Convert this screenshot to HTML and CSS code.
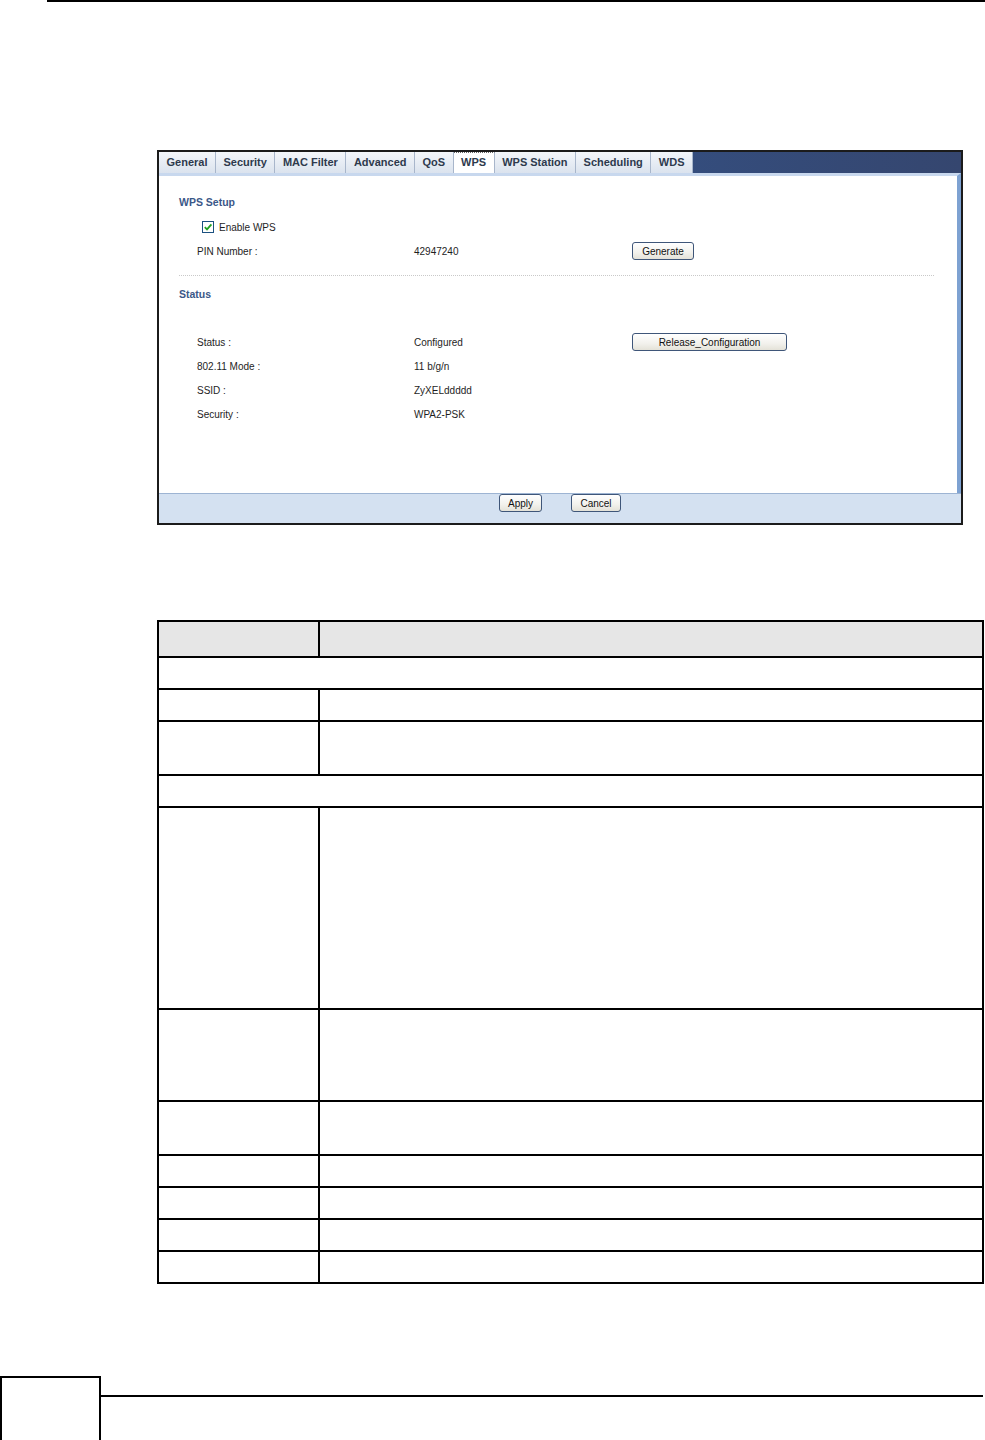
FILE: index.html
```html
<!DOCTYPE html>
<html>
<head>
    <title>WPS</title>
    <link rel="stylesheet" href="styles.css">
</head>
<body>
    <div class="page">
        <div class="top-rule"></div>

        <div class="shot">
            <nav class="tabbar">
                <span class="tab">General</span>
                <span class="tab">Security</span>
                <span class="tab">MAC Filter</span>
                <span class="tab">Advanced</span>
                <span class="tab">QoS</span>
                <span class="tab active">WPS</span>
                <span class="tab">WPS Station</span>
                <span class="tab">Scheduling</span>
                <span class="tab">WDS</span>
            </nav>
            <div class="panel">
                <h2 class="section-title first">WPS Setup</h2>
                <div class="row check-row">
                    <span class="checkbox">
                        <svg width="12" height="12" viewBox="0 0 12 12">
                            <rect x="0.5" y="0.5" width="11" height="11" fill="#fff" stroke="#1c5180"/>
                            <path d="M2.8 6.2 L5 8.4 L9.4 3.4" fill="none" stroke="#21a121" stroke-width="1.8"/>
                        </svg>
                    </span>
                    <span>Enable WPS</span>
                </div>
                <div class="row">
                    <span>PIN Number :</span>
                    <span>42947240</span>
                    <span><button class="btn btn-gen">Generate</button></span>
                </div>
                <div class="sep"></div>
                <h2 class="section-title">Status</h2>
                <div class="rows">
                    <div class="row">
                        <span>Status :</span>
                        <span>Configured</span>
                        <span><button class="btn btn-release">Release_Configuration</button></span>
                    </div>
                    <div class="row">
                        <span>802.11 Mode :</span>
                        <span>11 b/g/n</span>
                    </div>
                    <div class="row">
                        <span>SSID :</span>
                        <span>ZyXELddddd</span>
                    </div>
                    <div class="row">
                        <span>Security :</span>
                        <span>WPA2-PSK</span>
                    </div>
                </div>
            </div>
            <div class="panel-foot">
                <button class="btn btn-apply">Apply</button>
                <button class="btn btn-cancel">Cancel</button>
            </div>
        </div>

        <table class="desc">
            <tr class="h36 head"><td class="c1"></td><td></td></tr>
            <tr class="h32"><td colspan="2"></td></tr>
            <tr class="h32"><td class="c1"></td><td></td></tr>
            <tr class="h54"><td class="c1"></td><td></td></tr>
            <tr class="h32"><td colspan="2"></td></tr>
            <tr class="h202"><td class="c1"></td><td></td></tr>
            <tr class="h92"><td class="c1"></td><td></td></tr>
            <tr class="h54"><td class="c1"></td><td></td></tr>
            <tr class="h32"><td class="c1"></td><td></td></tr>
            <tr class="h32"><td class="c1"></td><td></td></tr>
            <tr class="h32"><td class="c1"></td><td></td></tr>
            <tr class="h32"><td class="c1"></td><td></td></tr>
        </table>

        <footer class="page-foot">
            <div class="page-num"></div>
            <div class="foot-rule"></div>
        </footer>
    </div>
</body>
</html>
```

FILE: styles.css
```css
* {
    box-sizing: border-box;
}

body {
    margin: 0;
    font-family: "Liberation Sans", Arial, sans-serif;
    background: #fff;
    color: #000;
}

.page {
    width: 985px;
    height: 1440px;
    position: relative;
    overflow: hidden;
}

.top-rule {
    margin-left: 47px;
    border-top: 2px solid #000;
}

/* router screenshot */
.shot {
    margin: 148px 0 0 157px;
    width: 806px;
    height: 375px;
    border: 2px solid #1b1b1b;
    display: flex;
    flex-direction: column;
    font-size: 10px;
    color: #1e1e1e;
}

.tabbar {
    display: flex;
    height: 21px;
    background: linear-gradient(to right, #2d5c98, #345083 50%, #35466f);
}

.tab {
    display: flex;
    align-items: center;
    padding: 0 7.5px 2px;
    font-size: 11px;
    font-weight: bold;
    color: #2e3a4d;
    background: linear-gradient(#f3f6fa, #dbe3ee);
    border-right: 1px solid #a8b6cb;
}

.tab.active {
    background: #fff;
    border-top: 1px dotted #666;
}

.panel {
    flex: 1;
    background: #fff;
    border-top: 3px solid #c8d8ee;
    border-right: 4px solid #7ea2d2;
    padding: 18px 0 0 20px;
}

.section-title {
    margin: 10px 0 0;
    font-size: 10.5px;
    line-height: 16px;
    font-weight: bold;
    color: #3b5888;
}

.section-title.first {
    margin-top: 0;
}

.row {
    display: grid;
    grid-template-columns: 217px 218px auto;
    align-items: center;
    height: 24px;
    padding-left: 18px;
}

.check-row {
    display: flex;
    gap: 5px;
    margin-top: 5px;
    padding-left: 23px;
}

.checkbox {
    display: flex;
}

.sep {
    margin: 12px 23px 0 0;
    border-top: 1px dotted #c9c9c9;
}

.rows {
    margin-top: 28px;
}

.btn {
    display: block;
    height: 18px;
    padding: 0;
    font-family: "Liberation Sans", Arial, sans-serif;
    font-size: 10px;
    color: #111;
    background: linear-gradient(#ffffff, #f2f1ec 60%, #e4e2d8);
    border: 1px solid #3f5679;
    border-radius: 3px;
}

.btn-gen {
    width: 62px;
}

.btn-release {
    width: 155px;
}

.btn-apply {
    width: 43px;
}

.btn-cancel {
    width: 50px;
}

.panel-foot {
    height: 30px;
    background: #d4e1f1;
    border-top: 1px solid #9db4d3;
    display: flex;
    justify-content: center;
    align-items: flex-start;
    gap: 29px;
}

/* description table */
.desc {
    margin: 95px 0 0 157px;
    width: 827px;
    border-collapse: collapse;
}

.desc td {
    border: 2px solid #000;
    padding: 0;
}

.desc .c1 {
    width: 161px;
}

.desc .head td {
    background: #e6e6e6;
}

.h32 { height: 32px; }
.h36 { height: 36px; }
.h54 { height: 54px; }
.h92 { height: 92px; }
.h202 { height: 202px; }

/* page footer */
.page-foot {
    display: flex;
    align-items: flex-start;
    margin-top: 92px;
}

.page-num {
    width: 101px;
    height: 66px;
    border: 2px solid #000;
}

.foot-rule {
    width: 882px;
    margin-top: 19px;
    border-top: 2px solid #000;
}
```
